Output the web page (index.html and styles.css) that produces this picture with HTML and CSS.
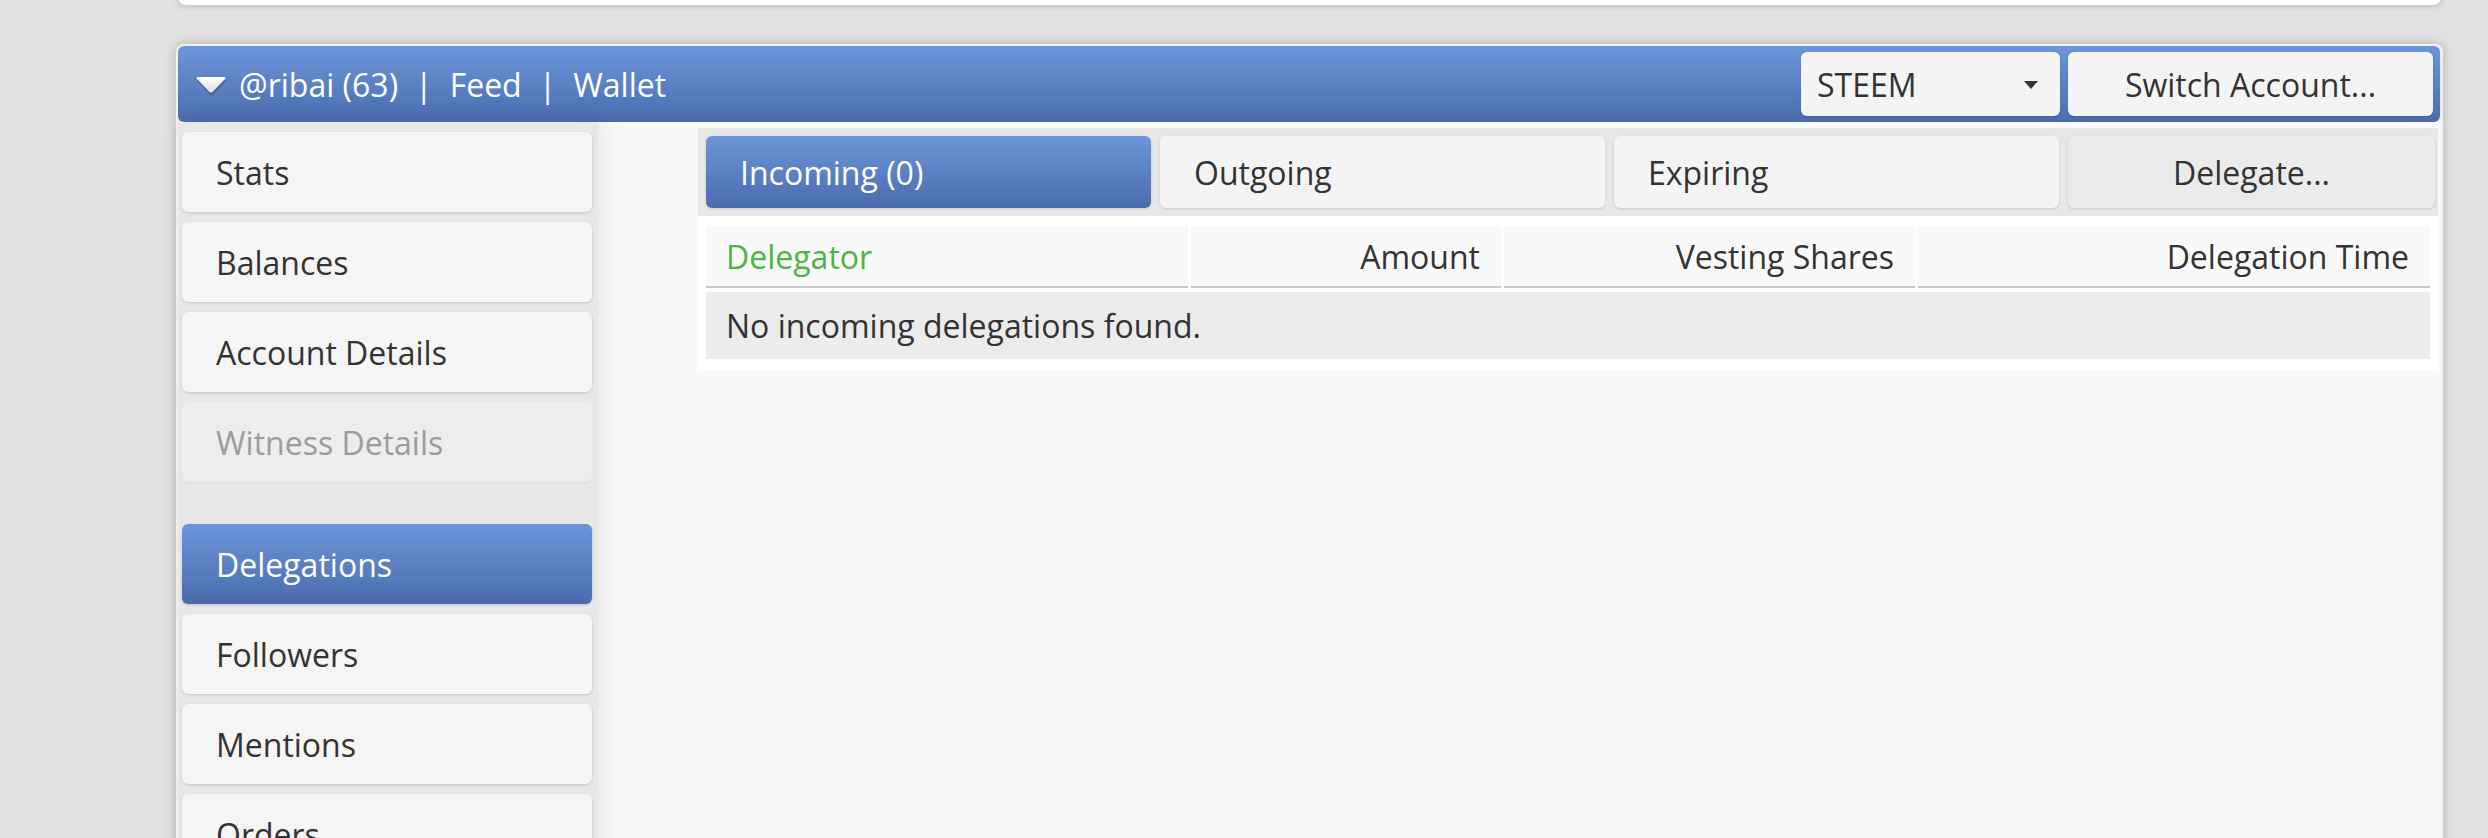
FILE: index.html
```html
<!DOCTYPE html>
<html>
<head>
<meta charset="utf-8">
<title>Delegations</title>
<link rel="stylesheet" href="styles.css">
</head>
<body>
<div class="page">
  <div class="topcard"></div>
  <div class="window">
    <div class="header">
      <div class="nav">
        <svg class="tri" width="34" height="22" viewBox="0 0 34 22">
          <defs>
            <linearGradient id="tg" x1="0" y1="0" x2="0" y2="1">
              <stop offset="0" stop-color="#ffffff"/>
              <stop offset="1" stop-color="#dcdcdc"/>
            </linearGradient>
          </defs>
          <path d="M4 4 L30 4 Q32 4 31 6 L18.5 19 Q17 20.5 15.5 19 L3 6 Q2 4 4 4 Z" fill="#3b4f72" opacity="0.55" transform="translate(0.5,1.5)"/>
          <path d="M4 3 L30 3 Q32 3 31 5 L18.5 18 Q17 19.5 15.5 18 L3 5 Q2 3 4 3 Z" fill="url(#tg)"/>
        </svg>
        <span class="nav-link">@ribai (63)</span>
        <span class="sep">|</span>
        <span class="nav-link">Feed</span>
        <span class="sep">|</span>
        <span class="nav-link">Wallet</span>
      </div>
      <div class="controls">
        <div class="select">
          <span>STEEM</span>
          <svg class="caret" width="14" height="8" viewBox="0 0 14 8"><path d="M0 0 L14 0 L7 8 Z" fill="#333"/></svg>
        </div>
        <div class="hbtn">Switch Account...</div>
      </div>
    </div>
    <div class="body">
      <div class="sidebar">
        <div class="item">Stats</div>
        <div class="item">Balances</div>
        <div class="item">Account Details</div>
        <div class="item disabled">Witness Details</div>
        <div class="item active group">Delegations</div>
        <div class="item">Followers</div>
        <div class="item">Mentions</div>
        <div class="item">Orders</div>
      </div>
      <div class="main">
        <div class="panel">
          <div class="tabbar">
            <div class="tab active">Incoming (0)</div>
            <div class="tab">Outgoing</div>
            <div class="tab">Expiring</div>
            <div class="tab action">Delegate...</div>
          </div>
          <div class="tablewrap">
            <div class="grid">
              <div class="th sorted">Delegator</div>
              <div class="th num">Amount</div>
              <div class="th num">Vesting Shares</div>
              <div class="th num">Delegation Time</div>
              <div class="td empty">No incoming delegations found.</div>
            </div>
          </div>
        </div>
      </div>
    </div>
  </div>
</div>
</body>
</html>
```
FILE: styles.css
```css
html, body {
  margin: 0;
  padding: 0;
  height: 100%;
  overflow: hidden;
}
body {
  background: #e1e1e1;
  font-family: "Open Sans", "Noto Sans", "Liberation Sans", sans-serif;
  font-size: 32px;
  color: #333;
}
.page {
  margin-left: 176px;
  width: 2267px;
  display: flex;
  flex-direction: column;
}
.topcard {
  height: 25px;
  margin: -20px 2px 0 2px;
  background: #ffffff;
  border-radius: 0 0 8px 8px;
  box-shadow: 0 1px 6px rgba(0, 0, 0, 0.18);
}
.window {
  margin-top: 39px;
  border: 2px solid #f3f3f3;
  border-radius: 8px;
  background: #ececec;
  box-shadow: 0 0 12px rgba(0, 0, 0, 0.2);
  height: 900px;
  display: flex;
  flex-direction: column;
}
.header {
  height: 76px;
  box-sizing: border-box;
  padding: 6px 7px 6px 16px;
  margin-right: 1px;
  border-radius: 6px;
  background: linear-gradient(#6d96da, #4a6cae);
  display: flex;
  align-items: center;
  justify-content: space-between;
  color: #ffffff;
}
.nav {
  display: flex;
  align-items: center;
}
.tri {
  margin-right: 11px;
  margin-top: 2px;
}
.sep {
  margin: 0 17px;
}
.controls {
  display: flex;
  gap: 8px;
  height: 64px;
}
.select {
  width: 259px;
  box-sizing: border-box;
  padding: 0 22px 0 16px;
  background: #f4f4f4;
  border-radius: 6px;
  display: flex;
  align-items: center;
  justify-content: space-between;
  color: #333;
  box-shadow: 0 1px 2px rgba(0, 0, 0, 0.15);
}
.caret {
  margin-top: 2px;
}
.hbtn {
  width: 365px;
  background: #f4f4f4;
  border-radius: 6px;
  display: flex;
  align-items: center;
  justify-content: center;
  color: #333;
  box-shadow: 0 1px 2px rgba(0, 0, 0, 0.15);
}
.body {
  flex: 1;
  display: flex;
}
.sidebar {
  width: 420px;
  box-sizing: border-box;
  padding: 10px 6px 0 4px;
  background: #e8e8e8;
  display: flex;
  flex-direction: column;
  gap: 10px;
  position: relative;
  z-index: 1;
  box-shadow: 6px 0 22px rgba(0, 0, 0, 0.07);
}
.item {
  height: 80px;
  flex: none;
  box-sizing: border-box;
  padding-left: 34px;
  display: flex;
  align-items: center;
  background: #f5f5f5;
  border-radius: 6px;
  box-shadow: 0 1px 3px rgba(0, 0, 0, 0.16);
  color: #333;
}
.item.disabled {
  background: #ededed;
  color: #9c9c9c;
  box-shadow: 0 1px 2px rgba(0, 0, 0, 0.05);
}
.item.group {
  margin-top: 32px;
}
.item.active {
  background: linear-gradient(#6d95d9, #4a6cae);
  color: #ffffff;
}
.main {
  flex: 1;
  background: #f9f9f9;
  padding: 6px 3px 0 100px;
}
.panel {
  display: flex;
  flex-direction: column;
}
.tabbar {
  background: #e8e8e8;
  padding: 8px 3px 8px 8px;
  display: flex;
  gap: 9px;
}
.tab {
  flex: 1;
  height: 72px;
  box-sizing: border-box;
  padding-left: 34px;
  display: flex;
  align-items: center;
  background: #f4f4f4;
  border-radius: 6px;
  box-shadow: 0 1px 3px rgba(0, 0, 0, 0.15);
  color: #333;
}
.tab.active {
  background: linear-gradient(#6d95d9, #4a6cae);
  color: #ffffff;
}
.tab.action {
  flex: none;
  width: 367px;
  padding-left: 0;
  justify-content: center;
  background: #ebebeb;
}
.tablewrap {
  background: #ffffff;
  padding: 10px 8px 11px 8px;
}
.grid {
  display: grid;
  grid-template-columns: 482px 310px 411px 1fr;
  column-gap: 3px;
  row-gap: 4px;
}
.th {
  height: 60px;
  border-bottom: 2px solid #c9c9c9;
  background: #f9f9f9;
  display: flex;
  align-items: center;
  padding: 0 21px 0 20px;
  color: #333;
}
.th.num {
  justify-content: flex-end;
}
.th.sorted {
  color: #4bb542;
}
.td.empty {
  grid-column: 1 / -1;
  height: 67px;
  background: #ececec;
  display: flex;
  align-items: center;
  padding-left: 20px;
  color: #333;
}
```
